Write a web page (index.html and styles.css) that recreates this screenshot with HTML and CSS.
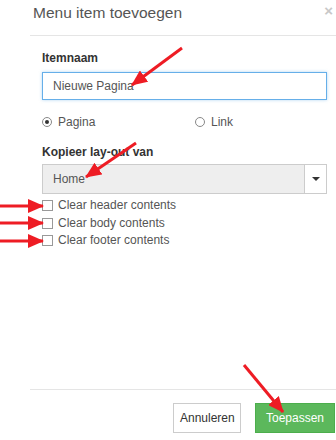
FILE: index.html
```html
<!DOCTYPE html>
<html lang="nl">
<head>
  <meta charset="UTF-8">
  <title>Menu item toevoegen</title>
  <link rel="stylesheet" href="styles.css">
</head>
<body>
  <div class="modal">
    <div class="modal-header">
      <span class="modal-title">Menu item toevoegen</span>
      <span class="close">&times;</span>
    </div>

    <div class="modal-body">
      <label class="field-label first">Itemnaam</label>
      <div class="input">Nieuwe Pagina</div>

      <div class="radios">
        <span class="radio-item"><span class="radio checked"></span>Pagina</span>
        <span class="radio-item"><span class="radio"></span>Link</span>
      </div>

      <label class="field-label">Kopieer lay-out van</label>
      <div class="select">
        <span class="select-value">Home</span>
        <span class="select-btn"><span class="caret"></span></span>
      </div>

      <div class="checks">
        <div class="check-item"><span class="checkbox"></span>Clear header contents</div>
        <div class="check-item"><span class="checkbox"></span>Clear body contents</div>
        <div class="check-item"><span class="checkbox"></span>Clear footer contents</div>
      </div>
    </div>

    <div class="modal-footer">
      <button class="btn btn-default">Annuleren</button>
      <button class="btn btn-success">Toepassen</button>
    </div>
  </div>

  <!-- red annotation arrows drawn over the dialog -->
  <svg class="arrows" width="336" height="440" viewBox="0 0 336 440">
    <defs>
      <marker id="head" viewBox="0 0 16 14" refX="15" refY="7" markerWidth="16" markerHeight="14" orient="auto" markerUnits="userSpaceOnUse">
        <path d="M0 0 L16 7 L0 14 z" fill="#ee1c24"/>
      </marker>
    </defs>
    <g stroke="#ee1c24" stroke-width="3" marker-end="url(#head)">
      <line x1="182" y1="48" x2="132" y2="85"/>
      <line x1="136" y1="143" x2="86" y2="177"/>
      <line x1="0" y1="206" x2="43" y2="206"/>
      <line x1="0" y1="223" x2="43" y2="223"/>
      <line x1="0" y1="241" x2="43" y2="241"/>
      <line x1="244" y1="365" x2="283" y2="412"/>
    </g>
  </svg>
</body>
</html>
```

FILE: styles.css
```css
* {
  box-sizing: border-box;
}

body {
  margin: 0;
  background: #fff;
  font-family: 'Liberation Sans', Arial, sans-serif;
  font-size: 12px;
  color: #555;
}

.modal {
  position: relative;
  height: 440px;
  padding-left: 30px;
  display: flex;
  flex-direction: column;
}

.modal-header {
  height: 36px;
  border-bottom: 1px solid #e5e5e5;
  padding: 3px 3px 0 3px;
  display: flex;
  justify-content: space-between;
  align-items: flex-start;
}

.modal-title {
  font-size: 15.5px;
  line-height: 20px;
  color: #555;
}

.close {
  font-size: 15px;
  line-height: 16px;
  font-weight: bold;
  color: #c8c8c8;
}

.modal-body {
  flex: 1;
  padding: 0 9px 0 12px;
  display: flex;
  flex-direction: column;
}

.field-label {
  display: block;
  font-weight: bold;
  color: #333;
  line-height: 16px;
  margin-top: 14px;
}

.field-label.first {
  margin-top: 14px;
}

.input {
  margin-top: 6px;
  height: 28px;
  border: 1px solid #66afe9;
  box-shadow: 0 0 3px rgba(102, 175, 233, 0.5);
  padding: 0 10px;
  line-height: 26px;
  color: #555;
}

.radios {
  margin-top: 14px;
  display: grid;
  grid-template-columns: 153px 1fr;
  line-height: 16px;
}

.radio-item {
  display: flex;
  align-items: center;
  gap: 6px;
}

.radio {
  width: 10px;
  height: 10px;
  border: 1px solid #888;
  border-radius: 50%;
  display: flex;
  align-items: center;
  justify-content: center;
}

.radio.checked::after {
  content: '';
  width: 4px;
  height: 4px;
  border-radius: 50%;
  background: #333;
}

.select {
  margin-top: 4px;
  height: 30px;
  border: 1px solid #ccc;
  background: #eee;
  display: flex;
}

.select-value {
  flex: 1;
  padding-left: 10px;
  line-height: 28px;
  color: #555;
}

.select-btn {
  width: 22px;
  background: #fff;
  border-left: 1px solid #ccc;
  display: flex;
  align-items: center;
  justify-content: center;
}

.caret {
  width: 0;
  height: 0;
  border-left: 4px solid transparent;
  border-right: 4px solid transparent;
  border-top: 4px solid #333;
}

.checks {
  margin-top: 3px;
}

.check-item {
  display: flex;
  align-items: center;
  gap: 5px;
  line-height: 17.5px;
}

.checkbox {
  width: 11px;
  height: 11px;
  border: 1px solid #999;
  background: #fff;
}

.modal-footer {
  border-top: 1px solid #e5e5e5;
  height: 51px;
  padding: 13px 1px 0 0;
  display: flex;
  justify-content: flex-end;
  align-items: flex-start;
  gap: 14px;
}

.btn {
  height: 30px;
  font-family: 'Liberation Sans', Arial, sans-serif;
  font-size: 12px;
  padding: 0 6px;
  border: 1px solid #ccc;
  border-radius: 0;
}

.btn-default {
  width: 68px;
  background: #fff;
  color: #333;
}

.btn-success {
  width: 80px;
  background: #5cb85c;
  border-color: #4cae4c;
  color: #fff;
}

.arrows {
  position: absolute;
  left: 0;
  top: 0;
  pointer-events: none;
}
```
